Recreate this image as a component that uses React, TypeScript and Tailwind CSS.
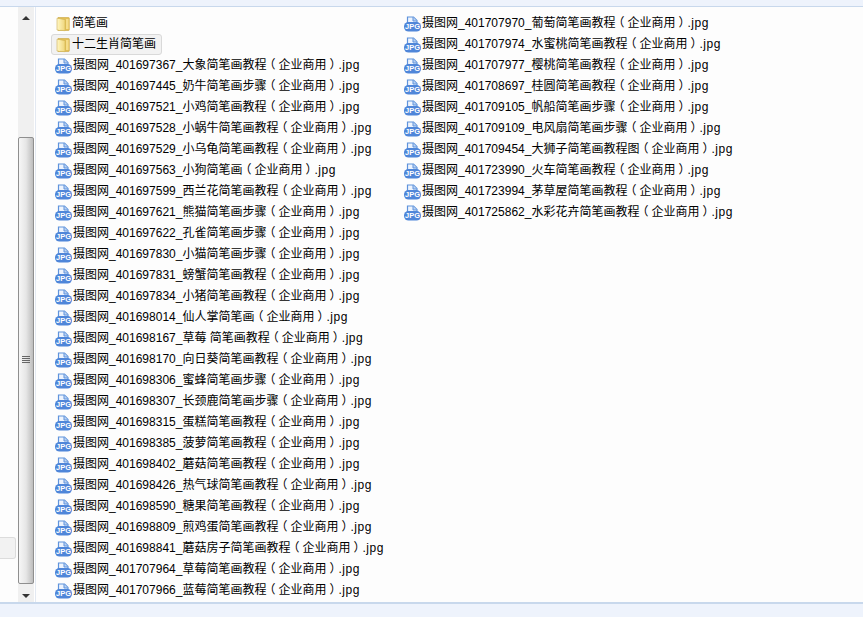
const leftFiles = [
  '摄图网_401697367_大象简笔画教程（企业商用）.jpg',
  '摄图网_401697445_奶牛简笔画步骤（企业商用）.jpg',
  '摄图网_401697521_小鸡简笔画教程（企业商用）.jpg',
  '摄图网_401697528_小蜗牛简笔画教程（企业商用）.jpg',
  '摄图网_401697529_小乌龟简笔画教程（企业商用）.jpg',
  '摄图网_401697563_小狗简笔画（企业商用）.jpg',
  '摄图网_401697599_西兰花简笔画教程（企业商用）.jpg',
  '摄图网_401697621_熊猫简笔画步骤（企业商用）.jpg',
  '摄图网_401697622_孔雀简笔画步骤（企业商用）.jpg',
  '摄图网_401697830_小猫简笔画步骤（企业商用）.jpg',
  '摄图网_401697831_螃蟹简笔画教程（企业商用）.jpg',
  '摄图网_401697834_小猪简笔画教程（企业商用）.jpg',
  '摄图网_401698014_仙人掌简笔画（企业商用）.jpg',
  '摄图网_401698167_草莓 简笔画教程（企业商用）.jpg',
  '摄图网_401698170_向日葵简笔画教程（企业商用）.jpg',
  '摄图网_401698306_蜜蜂简笔画步骤（企业商用）.jpg',
  '摄图网_401698307_长颈鹿简笔画步骤（企业商用）.jpg',
  '摄图网_401698315_蛋糕简笔画教程（企业商用）.jpg',
  '摄图网_401698385_菠萝简笔画教程（企业商用）.jpg',
  '摄图网_401698402_蘑菇简笔画教程（企业商用）.jpg',
  '摄图网_401698426_热气球简笔画教程（企业商用）.jpg',
  '摄图网_401698590_糖果简笔画教程（企业商用）.jpg',
  '摄图网_401698809_煎鸡蛋简笔画教程（企业商用）.jpg',
  '摄图网_401698841_蘑菇房子简笔画教程（企业商用）.jpg',
  '摄图网_401707964_草莓简笔画教程（企业商用）.jpg',
  '摄图网_401707966_蓝莓简笔画教程（企业商用）.jpg',
];

const rightFiles = [
  '摄图网_401707970_葡萄简笔画教程（企业商用）.jpg',
  '摄图网_401707974_水蜜桃简笔画教程（企业商用）.jpg',
  '摄图网_401707977_樱桃简笔画教程（企业商用）.jpg',
  '摄图网_401708697_桂圆简笔画教程（企业商用）.jpg',
  '摄图网_401709105_帆船简笔画步骤（企业商用）.jpg',
  '摄图网_401709109_电风扇简笔画步骤（企业商用）.jpg',
  '摄图网_401709454_大狮子简笔画教程图（企业商用）.jpg',
  '摄图网_401723990_火车简笔画教程（企业商用）.jpg',
  '摄图网_401723994_茅草屋简笔画教程（企业商用）.jpg',
  '摄图网_401725862_水彩花卉简笔画教程（企业商用）.jpg',
];

function FolderIcon() {
  return (
    <svg width="16" height="16" viewBox="0 0 16 16" className="shrink-0">
      <defs>
        <linearGradient id="door" x1="0" x2="1" y1="0" y2="0">
          <stop offset="0" stopColor="#fff6c8" />
          <stop offset="1" stopColor="#efd67a" />
        </linearGradient>
      </defs>
      <path d="M3 1.5h10.5a.8.8 0 0 1 .8.8v11.4a.8.8 0 0 1-.8.8H3z" fill="#e3bf55" stroke="#c9a53f" strokeWidth="0.6" />
      <path d="M11 3h2.5v10H11z" fill="#f5dd8a" />
      <path d="M2 2.2l7.5 1.3a.8.8 0 0 1 .6.8v10.4l-8.1-.7z" fill="url(#door)" stroke="#cdb052" strokeWidth="0.6" />
      <path d="M4.5 3v11" stroke="#fdeea6" strokeWidth="1.2" />
    </svg>
  );
}

function JpgIcon() {
  return (
    <svg width="17" height="16" viewBox="0 0 17 16" className="shrink-0">
      <path d="M3.5 1h6l3.5 3.5V8h-9.5z" fill="#eef4fd" stroke="#5f93dc" strokeWidth="1.2" />
      <path d="M9 1v4h4" fill="#bcd3f2" stroke="#5f93dc" strokeWidth="1" />
      <rect x="0" y="6" width="17" height="9.5" rx="4.5" fill="#4f86d9" />
      <text x="8.5" y="13.4" textAnchor="middle" fontSize="7.5" fontWeight="700" fill="#fff" fontFamily="Liberation Sans, sans-serif">JPG</text>
    </svg>
  );
}

// the fullwidth parens sit centred in their box in the reference, the extension runs wider
function Name({ text }: { text: string }) {
  const parts = text.split(/(（|）|\.jpg)/);
  return (
    <span className="whitespace-nowrap text-[12px] leading-[21px] text-black">
      {parts.map((p, i) => {
        if (p === '（' || p === '）') {
          return (
            <span key={i} className="px-[3px] [font-feature-settings:'halt']">
              {p}
            </span>
          );
        }
        if (p === '.jpg') {
          return (
            <span key={i} className="tracking-[0.5px]">
              {p}
            </span>
          );
        }
        return <span key={i}>{p}</span>;
      })}
    </span>
  );
}

function Row({ name, folder, selected }: { name: string; folder?: boolean; selected?: boolean }) {
  return (
    <div className="flex h-[21px] items-center">
      <div
        className={
          selected
            ? 'flex h-[21px] items-center gap-px rounded-[3px] border border-[#d9d9d9] bg-[#f2f2f2] pl-[3px] pr-[5px] -ml-1'
            : 'flex h-[21px] items-center gap-px'
        }
      >
        {folder ? <FolderIcon /> : <JpgIcon />}
        <Name text={name} />
      </div>
    </div>
  );
}

export default function App() {
  return (
    <div
      className="flex h-[617px] w-[863px] flex-col overflow-hidden bg-white"
      style={{ fontFamily: '"Liberation Sans", "Noto Sans CJK SC", sans-serif' }}
    >
      <div className="h-[7px] shrink-0 border-b border-[#c8d8ec] bg-[#eef3fc]" />
      <div className="flex min-h-0 flex-1 bg-[#fdfdfd]">
        <div className="relative w-[18px] shrink-0">
          <div className="absolute top-[530px] left-0 h-[22px] w-[16px] rounded-r-[3px] border border-l-0 border-[#dcdcdc] bg-[#f2f2f2]" />
        </div>
        {/* scrollbar */}
        <div className="flex w-[16px] shrink-0 flex-col bg-[#f0f0f0]">
          <div className="flex h-[16px] shrink-0 items-center justify-center pt-[5px]">
            <div className="h-0 w-0 border-x-[4px] border-b-[4px] border-x-transparent border-b-[#333]" />
          </div>
          <div className="relative mt-[114px] h-[447px] rounded-[2px] border border-[#8f8f8f] bg-gradient-to-r from-[#f6f6f6] via-[#e6e6e6] to-[#bdbdbd]">
            <div className="absolute top-[218px] left-[3px] flex w-[8px] flex-col gap-px">
              <div className="h-px bg-[#666]" />
              <div className="h-px bg-[#666]" />
              <div className="h-px bg-[#666]" />
              <div className="h-px bg-[#666]" />
            </div>
          </div>
          <div className="flex flex-1 items-center justify-center pb-[1px] pt-[7px]">
            <div className="h-0 w-0 border-x-[4px] border-t-[4px] border-x-transparent border-t-[#333]" />
          </div>
        </div>
        <div className="w-[1px] shrink-0 bg-white" />
        <div className="w-px shrink-0 bg-[#e3e9f2]" />
        <div className="flex min-w-0 flex-1 pt-[6px] pl-[19px]">
          <div className="w-[349px] shrink-0">
            <Row name="简笔画" folder />
            <Row name="十二生肖简笔画" folder selected />
            {leftFiles.map((f) => (
              <Row key={f} name={f} />
            ))}
          </div>
          <div>
            {rightFiles.map((f) => (
              <Row key={f} name={f} />
            ))}
          </div>
        </div>
      </div>
      <div className="h-[15px] shrink-0 border-t-2 border-[#c8d8ec] bg-[#eef3fc]" />
    </div>
  );
}
